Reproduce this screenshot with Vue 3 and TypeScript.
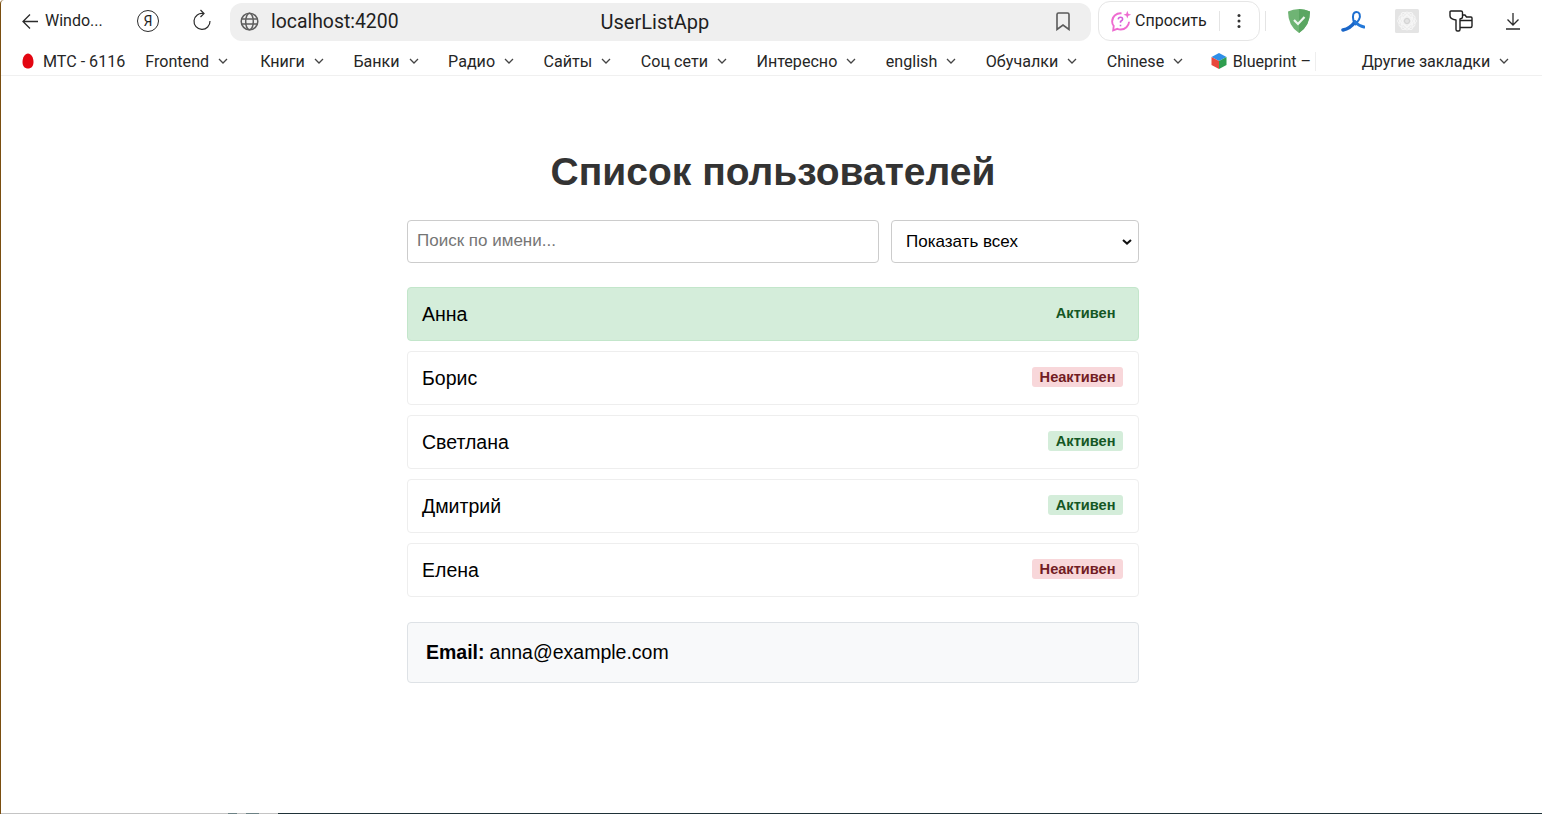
<script setup lang="ts">
import { computed, ref } from "vue";

interface User {
  id: number;
  name: string;
  email: string;
  active: boolean;
}

const users: User[] = [
  { id: 1, name: "Анна", email: "anna@example.com", active: true },
  { id: 2, name: "Борис", email: "boris@example.com", active: false },
  { id: 3, name: "Светлана", email: "svetlana@example.com", active: true },
  { id: 4, name: "Дмитрий", email: "dmitry@example.com", active: true },
  { id: 5, name: "Елена", email: "elena@example.com", active: false },
];

const bookmarks = [
  "Frontend",
  "Книги",
  "Банки",
  "Радио",
  "Сайты",
  "Соц сети",
  "Интересно",
  "english",
  "Обучалки",
  "Chinese",
];

const search = ref("");
const filter = ref("all");
const selectedId = ref(1);

const filtered = computed(() =>
  users.filter((u) => {
    const byName = u.name.toLowerCase().includes(search.value.toLowerCase());
    if (filter.value === "active") return byName && u.active;
    if (filter.value === "inactive") return byName && !u.active;
    return byName;
  }),
);

const selected = computed(() => users.find((u) => u.id === selectedId.value));
</script>

<template>
  <div class="window">
    <header class="toolbar">
      <button class="back">
        <svg width="18" height="18" viewBox="0 0 18 18" fill="none" stroke="#2b2b2b" stroke-width="1.300">
          <path d="M17 9.500H2M9 2.500 2 9.500l7 7" />
        </svg>
        <span>Windo...</span>
      </button>
      <span class="ya-logo">Я</span>
      <svg class="reload" width="20" height="22" viewBox="0 0 20 22" fill="none" stroke="#2b2b2b" stroke-width="1.200">
        <path d="M11.500 4.500A8 8 0 1 0 18 12" />
        <path d="M8.500 1 12 4.600 8.500 8" />
      </svg>
      <div class="omnibox">
        <svg width="19" height="19" viewBox="0 0 19 19" fill="none" stroke="#5f5f5f" stroke-width="1.500">
          <circle cx="9.500" cy="9.500" r="8.300" />
          <ellipse cx="9.500" cy="9.500" rx="3.800" ry="8.300" />
          <path d="M1.500 7h16M1.500 12h16" />
        </svg>
        <span class="host">localhost:4200</span>
        <span class="page-title">UserListApp</span>
        <svg class="bm-icon" width="16" height="19" viewBox="0 0 16 19" fill="none" stroke="#5a5a5a" stroke-width="1.600">
          <path d="M2 2.500q0-1.500 1.500-1.500h9q1.500 0 1.500 1.500V17.500L8 13l-6 4.500z" />
        </svg>
      </div>
      <div class="ask">
        <svg width="23" height="23" viewBox="0 0 22 22" fill="none">
          <path
            d="M12 3.200A8 8 0 0 0 3 11q0 2.600 1.500 4.300L4 19.500l4-1.500q1.500.7 3.200.7a8 8 0 0 0 8-7.500"
            stroke="#ee6bd0"
            stroke-width="1.800"
          />
          <path d="M8.800 9q.3-2 2.200-2t2.100 1.600q0 1.200-2.100 2.400v1.300M11 14.200v1.300" stroke="#d45fdc" stroke-width="1.500" />
          <path d="M17.500 0.800l1 2.700 2.700 1-2.700 1-1 2.700-1-2.700-2.700-1 2.700-1z" fill="#ee6bd0" />
        </svg>
        <span>Спросить</span>
        <i class="ask-sep"></i>
        <svg width="4" height="16" viewBox="0 0 4 16" fill="#333">
          <circle cx="2" cy="2.500" r="1.500" />
          <circle cx="2" cy="8" r="1.500" />
          <circle cx="2" cy="13.500" r="1.500" />
        </svg>
      </div>
      <i class="tool-sep"></i>
      <div class="extensions">
        <svg width="24" height="26" viewBox="0 0 24 26">
          <path d="M12 1q6 0 11 2.500Q23 18 12 25 1 18 1 3.500 6 1 12 1z" fill="#6fb474" />
          <path d="M12 1q6 0 11 2.500Q23 18 12 25z" fill="#5aa661" />
          <path d="M7 12l4 4 6.500-7" fill="none" stroke="#eef6ee" stroke-width="2.200" />
        </svg>
        <svg width="24" height="24" viewBox="0 0 24 24" fill="none" stroke-linecap="round">
          <path d="M12.500 12C11 6 12.500 3 15.500 3S20 6 18 10.500l-3.500 5" stroke="#1d6fd0" stroke-width="2" />
          <path d="M2 21c5-1 9-4 12-8" stroke="#1a66c8" stroke-width="3.600" />
          <path d="M14 13c3 3 6 4.500 9 5" stroke="#2378d8" stroke-width="3" />
        </svg>
        <svg width="24" height="24" viewBox="0 0 24 24" fill="none">
          <rect width="24" height="24" rx="1.500" fill="#e4e4e4" />
          <g stroke="#f6f6f6" stroke-width="1">
            <ellipse cx="12" cy="12" rx="9.500" ry="4" />
            <ellipse cx="12" cy="12" rx="9.500" ry="4" transform="rotate(60 12 12)" />
            <ellipse cx="12" cy="12" rx="9.500" ry="4" transform="rotate(120 12 12)" />
            <ellipse cx="12" cy="12" rx="9" ry="5" transform="rotate(30 12 12)" />
            <ellipse cx="12" cy="12" rx="9" ry="5" transform="rotate(90 12 12)" />
            <ellipse cx="12" cy="12" rx="9" ry="5" transform="rotate(150 12 12)" />
            <circle cx="12" cy="12" r="2.500" stroke="#d2d2d2" />
          </g>
        </svg>
        <svg width="24" height="24" viewBox="0 0 24 24" fill="none" stroke="#1f1f1f" stroke-width="1.400" stroke-linejoin="round">
          <path d="M2 2h10q1.500 0 1.500 1.500V8q0 1.500-2.500 2v10.500q0 1.500-1.500 1.500h-1q-1.500 0-1.500-1.500V11Q1 10 1 7V3q0-1 1-1z" />
          <path d="M13.500 6H16l1.500 2H22q1 0 1 1v8q0 1.500-1.500 1.500H11M11 11.500h12" />
        </svg>
        <svg class="download" width="16" height="18" viewBox="0 0 16 18" fill="none" stroke="#2b2b2b" stroke-width="1.300">
          <path d="M8 1v11.500M2.500 7.500 8 13l5.500-5.500M1 17h14" />
        </svg>
      </div>
    </header>

    <nav class="bookmarks">
      <span class="bookmark mts">
        <svg width="12" height="16" viewBox="0 0 12 16">
          <path d="M6 0.500C9 .5 11.500 4.500 11.500 9S9 15.500 6 15.500.5 13.500.5 9 3 .5 6 .5z" fill="#e30611" />
        </svg>
        МТС - 6116
      </span>
      <span v-for="b in bookmarks" :key="b" class="bookmark">
        {{ b }}
        <svg width="10" height="6" viewBox="0 0 10 6" fill="none" stroke="#444" stroke-width="1.300">
          <path d="M1 1l4 4 4-4" />
        </svg>
      </span>
      <span class="bookmark blueprint">
        <svg width="18" height="18" viewBox="0 0 18 18">
          <path d="M9 1l7.500 4L9 9 1.500 5z" fill="#2f8fe8" />
          <path d="M1.500 5 9 9v8l-7.500-4z" fill="#e8483c" />
          <path d="M16.500 5 9 9v8l7.500-4z" fill="#2e9e4f" />
        </svg>
        <span class="blueprint-text">Blueprint –</span>
      </span>
      <span class="bookmark other">
        Другие закладки
        <svg width="10" height="6" viewBox="0 0 10 6" fill="none" stroke="#444" stroke-width="1.300">
          <path d="M1 1l4 4 4-4" />
        </svg>
      </span>
    </nav>

    <main class="page">
      <div class="container">
        <h1>Список пользователей</h1>

        <div class="controls">
          <input v-model="search" type="text" placeholder="Поиск по имени..." />
          <div class="select-wrap">
            <select v-model="filter">
              <option value="all">Показать всех</option>
              <option value="active">Только активные</option>
              <option value="inactive">Только неактивные</option>
            </select>
            <svg class="select-arrow" width="10" height="6" viewBox="0 0 10 6" fill="none" stroke="#111" stroke-width="2">
              <path d="M1 1l4 3.600L9 1" />
            </svg>
          </div>
        </div>

        <ul class="user-list">
          <li
            v-for="u in filtered"
            :key="u.id"
            class="user"
            :class="{ selected: u.id === selectedId }"
            @click="selectedId = u.id"
          >
            <span>{{ u.name }}</span>
            <span class="badge" :class="u.active ? 'on' : 'off'">{{ u.active ? "Активен" : "Неактивен" }}</span>
          </li>
        </ul>

        <div v-if="selected" class="details"><strong>Email:</strong> {{ selected.email }}</div>
      </div>
    </main>

    <div class="edge">
      <i class="edge-light"></i>
      <i class="edge-dark"></i>
    </div>
  </div>
</template>

<style scoped>
.window {
  display: flex;
  flex-direction: column;
  height: 814px;
  box-sizing: border-box;
  border-left: 1px solid #7a4e10;
  border-top-left-radius: 4px;
  background: #fff;
  font-family: Roboto, "Noto Sans", sans-serif;
  color: #1f1f1f;
  overflow: hidden;
}

.toolbar {
  display: flex;
  align-items: center;
  height: 42px;
  flex: none;
  padding-left: 20px;
}

.back {
  display: flex;
  align-items: center;
  gap: 6px;
  width: 116px;
  padding: 0;
  border: 0;
  background: none;
  font: inherit;
  font-size: 16px;
  color: #1f1f1f;
  margin-top: -1px;
}

.ya-logo {
  display: flex;
  align-items: center;
  justify-content: center;
  width: 22px;
  height: 22px;
  border: 1.500px solid #2b2b2b;
  border-radius: 50%;
  font-size: 14px;
  box-sizing: border-box;
}

.reload {
  margin-left: 33px;
  margin-top: -2px;
}

.omnibox {
  display: flex;
  align-items: center;
  width: 861px;
  height: 38px;
  margin-left: 18px;
  margin-top: 1px;
  padding: 0 20px 0 10px;
  box-sizing: border-box;
  border-radius: 12px;
  background: #efefef;
  position: relative;
}

.host {
  margin-left: 12px;
  font-size: 19.400px;
}

.page-title {
  margin-left: 202px;
  font-size: 20px;
}

.bm-icon {
  margin-left: auto;
}

.ask {
  display: flex;
  align-items: center;
  width: 162px;
  height: 40px;
  margin-left: 7px;
  padding-left: 10px;
  box-sizing: border-box;
  border: 1px solid #e6e6e6;
  border-radius: 12px;
  font-size: 16px;
}

.ask span {
  margin-left: 3px;
  margin-top: -2px;
}

.ask-sep {
  width: 1px;
  height: 20px;
  background: #e4e4e4;
  margin: 0 17px 0 12px;
}

.tool-sep {
  width: 1px;
  height: 20px;
  background: #e4e4e4;
  margin-left: 5px;
}

.extensions {
  display: flex;
  align-items: center;
  gap: 30px;
  margin-left: 21px;
}

.download {
  margin-left: 2px;
}

.bookmarks {
  display: flex;
  align-items: center;
  height: 34px;
  flex: none;
  box-sizing: border-box;
  padding: 5px 0 0 21px;
  border-bottom: 1px solid #f0f0f0;
  font-size: 16.100px;
  white-space: nowrap;
}

.bookmark {
  display: flex;
  align-items: center;
  gap: 9px;
  margin-right: 29.500px;
  color: #262626;
}

.mts {
  margin-right: 20px;
}

.mts + .bookmark {
  margin-right: 32px;
}

.blueprint {
  margin-left: -3px;
  gap: 5px;
  margin-right: 0;
}

.blueprint-text {
  width: 82px;
  overflow: hidden;
  border-right: 1px solid #eee;
}

.other {
  margin-left: 46px;
  margin-right: 0;
}

.page {
  flex: 1;
  min-height: 0;
  display: flex;
  justify-content: center;
  padding-left: 3px;
  font-family: "Liberation Sans", Arial, sans-serif;
  color: #000;
}

.container {
  width: 732px;
}

h1 {
  margin: 74px 0 27px;
  text-align: center;
  font-size: 39px;
  line-height: 43px;
  font-weight: 700;
  color: #333;
}

.controls {
  display: flex;
  gap: 12px;
  margin-bottom: 24px;
}

input,
select {
  height: 43px;
  box-sizing: border-box;
  border: 1px solid #ccc;
  border-radius: 4px;
  background: #fff;
  font-family: "Liberation Sans", Arial, sans-serif;
  font-size: 17px;
  color: #000;
}

input {
  flex: 2;
  min-width: 0;
  padding: 0 9px 2px;
  outline: none;
}

input::placeholder {
  color: #757575;
}

.select-wrap {
  position: relative;
  width: 248px;
  flex: none;
}

select {
  display: block;
  width: 100%;
  padding: 0 24px 0 14px;
  appearance: none;
}

.select-arrow {
  position: absolute;
  top: 19px;
  right: 7px;
  pointer-events: none;
}

.user-list {
  display: flex;
  flex-direction: column;
  gap: 10px;
  margin: 0 0 25px;
  padding: 0;
  list-style: none;
}

.user {
  display: flex;
  align-items: center;
  justify-content: space-between;
  height: 54px;
  padding: 0 15px 0 14px;
  box-sizing: border-box;
  border: 1px solid #eee;
  border-radius: 4px;
  font-size: 19.500px;
  cursor: pointer;
}

.user.selected {
  background: #d4edda;
  border-color: #c3e6cb;
}

.badge {
  padding: 2px 7.500px;
  border-radius: 3px;
  font-size: 14.600px;
  line-height: 16px;
  font-weight: 700;
  margin-top: -3px;
}

.badge.on {
  background: #d4edda;
  color: #155724;
}

.badge.off {
  background: #f8d7da;
  color: #721c24;
}

.details {
  height: 61px;
  padding: 0 18px;
  display: flex;
  align-items: center;
  gap: 5px;
  box-sizing: border-box;
  border: 1px solid #dee2e6;
  border-radius: 4px;
  background: #f8f9fa;
  font-size: 19.500px;
}

.edge {
  display: flex;
  height: 1px;
  flex: none;
}

.edge-light {
  width: 277px;
  background: linear-gradient(90deg, #c4c4c4 227px, #6d8285 227px 236px, #c4c4c4 236px 245px, #6d8285 245px 258px, #c4c4c4 258px);
}

.edge-dark {
  flex: 1;
  background: #1f3238;
}
</style>
